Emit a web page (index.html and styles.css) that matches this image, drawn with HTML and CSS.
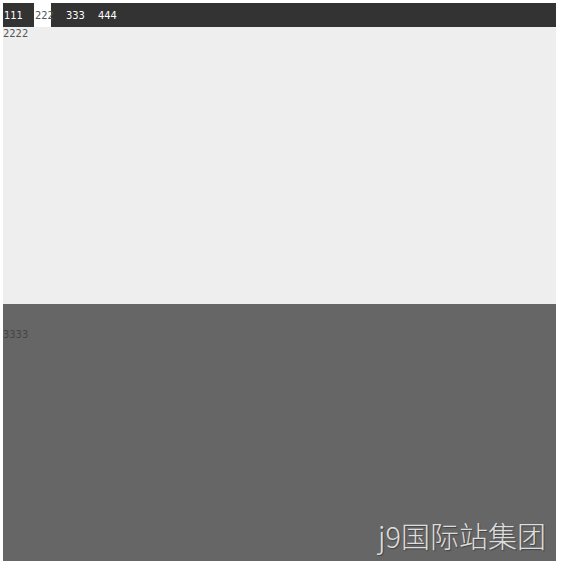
FILE: index.html
```html
<!DOCTYPE html>
<html lang="zh">
<head>
<meta charset="utf-8">
<title>tabs</title>
<link rel="stylesheet" href="styles.css">
</head>
<body>
<div class="page">
  <nav class="nav">
    <span class="item first">111</span>
    <span class="item active">222</span>
    <span class="item">333</span>
    <span class="item">444</span>
  </nav>
  <section class="panel light">2222</section>
  <section class="panel dark">
    <p class="label">3333</p>
    <div class="mark">j9国际站集团</div>
  </section>
</div>
</body>
</html>
```
FILE: styles.css
```css
html, body {
  margin: 0;
  padding: 0;
  background: #fff;
}
body {
  padding: 3px 5px 3px 3px;
  font-family: "Liberation Sans Narrow", "DejaVu Sans Condensed", "Open Sans", sans-serif;
  font-size: 11px;
}
.page {
  width: 553px;
  display: flex;
  flex-direction: column;
}
.nav {
  height: 24px;
  background: #333;
  display: flex;
  align-items: center;
}
.item {
  color: #fff;
  height: 24px;
  line-height: 25px;
  width: 16px;
  margin-right: 16px;
  white-space: nowrap;
}
.item.first {
  width: 30px;
  padding-left: 1px;
  margin-right: 0;
}
.item.active {
  background: #fff;
  color: #555;
  width: 16px;
  padding-left: 1px;
  margin-right: 15px;
}
.panel.light {
  height: 277px;
  background: #eee;
  color: #555;
  line-height: 13px;
}
.panel.dark {
  height: 257px;
  background: #666;
  position: relative;
}
.label {
  margin: 0;
  padding-top: 24px;
  color: #444;
  line-height: 13px;
}
.mark {
  position: absolute;
  right: 10px;
  bottom: 5px;
  font-family: "Noto Sans CJK SC", "Noto Sans", sans-serif;
  font-size: 29px;
  font-weight: 300;
  color: #ddd;
  text-shadow: 1px 1px 1px #444;
}
```
